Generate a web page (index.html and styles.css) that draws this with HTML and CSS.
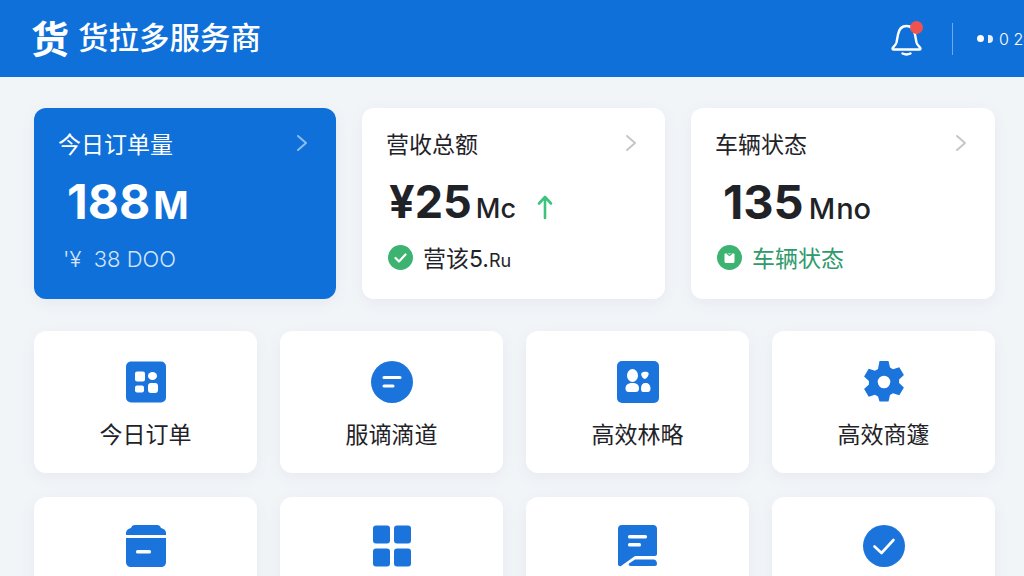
FILE: index.html
```html
<!DOCTYPE html>
<html lang="zh-CN">
<head>
  <meta charset="UTF-8">
  <meta name="viewport" content="width=device-width, initial-scale=1.0">
  <title>货拉多服务商</title>
  <link rel="stylesheet" href="styles.css">
</head>
<body>

  <header class="topbar">
    <div class="brand">
      <span class="brand-mark">货</span>
      <span class="brand-name">货拉多服务商</span>
    </div>
    <div class="topbar-right">
      <div class="bell">
        <svg width="32" height="34" viewBox="0 0 32 34" fill="none" stroke="#fff" stroke-width="2.4" stroke-linecap="round" stroke-linejoin="round">
          <path d="M1.500 26.500c0-1.500 3-2.500 4-6l1.500-8C8 7 11 4 15.500 4S23 7 24 12.500l1.500 8c1 3.500 4 4.500 4 6 0 .6-.4 1-1 1h-26c-.6 0-1-.4-1-1Z"/>
          <path d="M11.500 31.500c2.500 1.200 5.500 1.200 8 0"/>
        </svg>
        <span class="bell-dot"></span>
      </div>
      <span class="divider"></span>
      <div class="status">
        <span class="status-dot"></span>
        <span class="status-half"></span>
        <span class="status-text">0 24</span>
      </div>
    </div>
  </header>

  <main class="content">
    <section class="stats">
      <div class="stat stat-blue">
        <div class="stat-head">
          <span>今日订单量</span>
          <svg class="chevron" width="12" height="18" viewBox="0 0 12 18" fill="none" stroke-width="2" stroke-linecap="round" stroke-linejoin="round"><path d="M2 2l8 7-8 7"/></svg>
        </div>
        <div class="stat-value value-a"><span>188</span><small class="unit-m">M</small></div>
        <div class="stat-foot foot-a">'¥&nbsp; 38 DOO</div>
      </div>

      <div class="stat">
        <div class="stat-head">
          <span>营收总额</span>
          <svg class="chevron" width="12" height="18" viewBox="0 0 12 18" fill="none" stroke-width="2" stroke-linecap="round" stroke-linejoin="round"><path d="M2 2l8 7-8 7"/></svg>
        </div>
        <div class="stat-value value-b">
          <span>¥25</span><small>Mc</small>
          <svg class="trend" width="18" height="26" viewBox="0 0 18 26" fill="none" stroke="#3cc47c" stroke-width="2.6" stroke-linecap="round" stroke-linejoin="round"><path d="M9 24V3M3 9.500L9 3l6 6.500"/></svg>
        </div>
        <div class="stat-foot">
          <svg width="25" height="25" viewBox="0 0 25 25"><circle cx="12.500" cy="12.500" r="12.500" fill="#3cb371"/><path d="M7.500 13l3.500 3.500 6.500-7" fill="none" stroke="#fff" stroke-width="2.200" stroke-linecap="round" stroke-linejoin="round"/></svg>
          <span>营该5.<span class="foot-small">Ru</span></span>
        </div>
      </div>

      <div class="stat">
        <div class="stat-head">
          <span>车辆状态</span>
          <svg class="chevron" width="12" height="18" viewBox="0 0 12 18" fill="none" stroke-width="2" stroke-linecap="round" stroke-linejoin="round"><path d="M2 2l8 7-8 7"/></svg>
        </div>
        <div class="stat-value value-c"><span>135</span><small>M</small><small class="unit-no">no</small></div>
        <div class="stat-foot foot-green">
          <svg width="25" height="25" viewBox="0 0 25 25"><circle cx="12.500" cy="12.500" r="12.500" fill="#3cb371"/><path d="M7.500 9.500c0-.6.400-1 1-1h8c.6 0 1 .4 1 1v7c0 .8-.6 1.500-1.500 1.500h-7c-.9 0-1.500-.7-1.500-1.500Z" fill="#fff"/><path d="M10 8.500l2.500 2 2.500-2" fill="none" stroke="#3cb371" stroke-width="1.200"/></svg>
          <span>车辆状态</span>
        </div>
      </div>
    </section>

    <section class="shortcuts">
      <div class="shortcut">
        <svg width="40" height="41" viewBox="0 0 40 41">
          <rect width="40" height="41" rx="5" fill="#1b74dc"/>
          <rect x="9" y="10" width="10" height="10" rx="2" fill="#fff"/>
          <ellipse cx="26.500" cy="14.500" rx="4.500" ry="4" fill="#fff"/>
          <rect x="9" y="24" width="9" height="7" rx="2" fill="#fff"/>
          <rect x="22" y="21.500" width="10" height="10" rx="3" fill="#fff"/>
        </svg>
        <span>今日订单</span>
      </div>
      <div class="shortcut">
        <svg width="42" height="42" viewBox="0 0 42 42">
          <circle cx="21" cy="21" r="21" fill="#1b74dc"/>
          <rect x="11.500" y="15" width="19" height="3" rx="1.500" fill="#fff"/>
          <rect x="11.500" y="23.500" width="12" height="3" rx="1.500" fill="#fff"/>
        </svg>
        <span>服谪滴道</span>
      </div>
      <div class="shortcut">
        <svg width="42" height="42" viewBox="0 0 42 42">
          <rect width="42" height="42" rx="5" fill="#1b74dc"/>
          <ellipse cx="15.500" cy="14.500" rx="5.500" ry="6.500" fill="#fff"/>
          <path d="M24.500 12c1.500-1.500 6-2 7 0 .6 1.500-1 5-3.500 6-2.500-.5-4.500-4-3.500-6Z" fill="#fff"/>
          <path d="M8.500 27.500c0-4 3-5.500 7-5.500s6.500 1.500 6.500 5.500c0 2-1 3.500-3 3.500H11.500c-2 0-3-1.500-3-3.500Z" fill="#fff"/>
          <path d="M24 27.500c0-3.500 1.500-5.500 4.500-5.500s5 2 5 5.500c0 2-1 3.500-2.500 3.500h-5c-1.500 0-2-1.500-2-3.500Z" fill="#fff"/>
        </svg>
        <span>高效林略</span>
      </div>
      <div class="shortcut">
        <svg width="42" height="42" viewBox="0 0 42 42">
          <path fill-rule="evenodd" fill="#1b74dc" d="M16.500 0h9l1.500 6.500 3 1.700 6.300-2 4.600 7.800-4.800 4.500v3.400l4.800 4.500-4.600 7.800-6.300-2-3 1.700-1.500 6.600h-9L15 35.400l-3-1.700-6.300 2L1.100 27.900l4.800-4.500V20L1.100 15.500l4.600-7.800 6.300 2 3-1.700ZM21 14.700a6.300 6.300 0 1 0 0 12.600 6.300 6.300 0 0 0 0-12.600Z"/>
        </svg>
        <span>高效商籧</span>
      </div>
      <div class="shortcut shortcut-cut">
        <svg width="40" height="42" viewBox="0 0 40 42" fill="#1b74dc">
          <path d="M5 3C5.600 1 7 0 9 0h22c2 0 3.400 1 4 3 3 .5 5 2.500 5 5v2H0V8c0-2.500 2-4.500 5-5Z"/>
          <path d="M0 13h40v24c0 3-2 5-5 5H5c-3 0-5-2-5-5Z"/>
          <rect x="10" y="25" width="15" height="3.500" rx="1.500" fill="#fff"/>
        </svg>
      </div>
      <div class="shortcut shortcut-cut">
        <svg width="38" height="41" viewBox="0 0 38 41" fill="#1b74dc">
          <rect width="17" height="18" rx="3"/>
          <rect x="21" width="17" height="18" rx="3"/>
          <rect y="23" width="17" height="18" rx="3"/>
          <rect x="21" y="23" width="17" height="18" rx="3"/>
        </svg>
      </div>
      <div class="shortcut shortcut-cut">
        <svg width="40" height="42" viewBox="0 0 40 42" fill="#1b74dc">
          <path d="M4 0h31a4 4 0 0 1 4 4v25c0 1-1 2-2 2H17L3 41c-1 .6-3 0-3-2V4a4 4 0 0 1 4-4Z"/>
          <path d="M11 38.500l6-4h19c2 0 3 2.500 3 4.500 0 1-1 2-2 2H13c-2 0-3-1-2-2.500Z"/>
          <rect x="10" y="10" width="19" height="3.500" rx="1.500" fill="#fff"/>
          <rect x="10" y="18" width="13" height="3.500" rx="1.500" fill="#fff"/>
        </svg>
      </div>
      <div class="shortcut shortcut-cut">
        <svg width="42" height="42" viewBox="0 0 42 42">
          <circle cx="21" cy="21" r="21" fill="#1b74dc"/>
          <path d="M11.500 21.500l7 6.500 12-13" fill="none" stroke="#fff" stroke-width="2.600" stroke-linecap="round" stroke-linejoin="round"/>
        </svg>
      </div>
    </section>
  </main>

</body>
</html>
```

FILE: styles.css
```css
* {
  box-sizing: border-box;
}
html, body {
  height: 100%;
}
body {
  margin: 0;
  overflow: hidden;
  background: #f2f5f8;
  color: #1f2328;
  font-family: Inter, "Noto Sans CJK SC", sans-serif;
}

.topbar {
  display: flex;
  align-items: center;
  height: 77px;
  padding-left: 31px;
  background: #1070d9;
  color: #fff;
}
.brand {
  display: flex;
  flex: 1;
  align-items: center;
  gap: 9px;
  min-width: 0;
}
.brand-mark {
  font-size: 38px;
  font-weight: 700;
  line-height: 1;
}
.brand-name {
  font-size: 30.5px;
  font-weight: 500;
  line-height: 1;
}
.topbar-right {
  display: flex;
  flex: none;
  align-items: center;
  width: 133px;
  height: 100%;
  overflow: hidden;
}
.bell {
  position: relative;
  flex: none;
  width: 32px;
  height: 34px;
}
.bell-dot {
  position: absolute;
  top: -1px;
  right: 0;
  width: 13px;
  height: 13px;
  border-radius: 50%;
  background: #ef5350;
}
.divider {
  flex: none;
  width: 1px;
  height: 32px;
  margin-left: 29px;
  background: rgba(255, 255, 255, 0.4);
}
.status {
  display: flex;
  flex: none;
  align-items: center;
  margin-left: 24px;
  white-space: nowrap;
}
.status-dot {
  width: 7px;
  height: 7px;
  border-radius: 50%;
  background: #fff;
}
.status-half {
  width: 5px;
  height: 8px;
  margin-left: 4px;
  border-radius: 0 4px 4px 0;
  background: #e6f0fc;
}
.status-text {
  margin-left: 6px;
  font-size: 16px;
  font-weight: 300;
}

.content {
  padding: 31px 29px 0 34px;
}
.stats {
  display: grid;
  grid-template-columns: 302px 303px 1fr;
  gap: 26px;
}
.stat {
  height: 191px;
  padding: 19px 28px 0 24px;
  background: #fff;
  border-radius: 12px;
  box-shadow: 0 4px 16px rgba(40, 70, 110, 0.06);
}
.stat-blue {
  background: #1070d9;
  color: #fff;
}
.stat-head {
  display: flex;
  align-items: center;
  justify-content: space-between;
  height: 32px;
  font-size: 23px;
}
.chevron {
  stroke: #c4c7ca;
}
.stat-blue .chevron {
  stroke: #8fbcf0;
}
.stat-value {
  display: flex;
  align-items: baseline;
  height: 56px;
  margin-top: 15px;
  font-size: 47px;
  font-weight: 700;
  line-height: 56px;
}
.stat-value small {
  margin-left: 5px;
  font-size: 29px;
  font-weight: 500;
}
.stat-blue .unit-m {
  margin-left: 3px;
  font-size: 38px;
  font-weight: 700;
}
.value-a {
  padding-left: 9px;
  font-size: 48px;
}
.value-b {
  padding-left: 3px;
  font-size: 45px;
}
.value-b small {
  margin-left: 4px;
  font-size: 27px;
}
.value-c {
  padding-left: 8px;
}
.stat-value .unit-no {
  margin-left: 1px;
}
.trend {
  align-self: center;
  margin: 10px 0 0 20px;
}
.stat-foot {
  display: flex;
  align-items: center;
  gap: 10px;
  height: 30px;
  margin-top: 12px;
  padding-left: 2px;
  font-size: 23px;
}
.foot-a {
  padding: 3px 0 0 5px;
  color: #d4e5fa;
  font-size: 22px;
  font-weight: 300;
}
.foot-small {
  font-size: 18px;
}
.foot-green {
  color: #2f9a6c;
}

.shortcuts {
  display: grid;
  grid-template-columns: repeat(4, 1fr);
  gap: 24px 23px;
  margin-top: 32px;
}
.shortcut {
  display: flex;
  flex-direction: column;
  align-items: center;
  height: 142px;
  padding-top: 30px;
  background: #fff;
  border-radius: 12px;
  box-shadow: 0 4px 16px rgba(40, 70, 110, 0.06);
  font-size: 23px;
}
.shortcut-cut {
  padding-top: 28px;
}
.shortcut svg {
  flex: none;
  height: 42px;
}
.shortcut span {
  margin-top: 16px;
  line-height: 32px;
}
```
